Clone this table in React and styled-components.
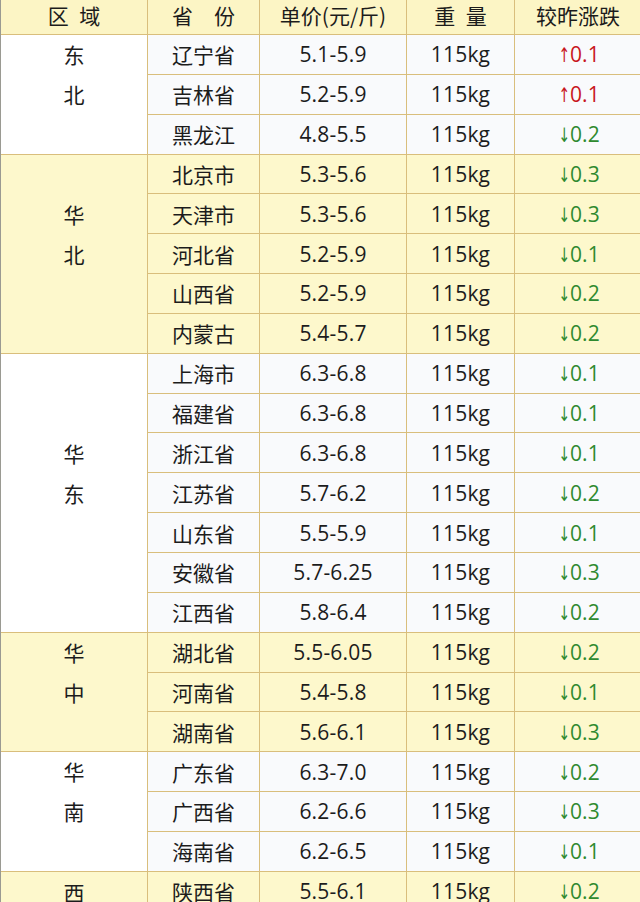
import React from "react";
import styled, { createGlobalStyle } from "styled-components";

const Global = createGlobalStyle`
  html, body { margin: 0; padding: 0; background: #ffffff; }
  body { width: 640px; height: 902px; overflow: hidden; }
`;

const Grid = styled.div`
  display: grid;
  grid-template-columns: 146px 111px 146px 107px 126px;
  grid-template-rows: 34px;
  grid-auto-rows: 38.85px;
  gap: 1px;
  width: 640px;
  background: #d9be7c;
  border-left: 1px solid #9a9a92;
  box-sizing: border-box;
  font-family: "Open Sans", "Noto Sans CJK SC", sans-serif;
  font-size: 21px;
  color: #1c1c1c;
`;

const HeadCell = styled.div`
  background: #fcf5c5;
  display: flex;
  align-items: center;
  justify-content: center;
  padding-bottom: 4px;
  box-sizing: border-box;
  font-family: "Noto Sans CJK SC", sans-serif;
  white-space: pre;
`;

const Cell = styled.div`
  background: ${(p) => (p.$yellow ? "#fdf8cc" : "#f9fafc")};
  display: flex;
  align-items: center;
  justify-content: center;
  white-space: nowrap;
  font-family: ${(p) => (p.$cjk ? '"Noto Sans CJK SC", sans-serif' : '"Open Sans", "Noto Sans CJK SC", sans-serif')};
  letter-spacing: ${(p) => (p.$cjk ? "0" : "0.2px")};
`;

const RegionCell = styled.div`
  grid-row: span ${(p) => p.$span};
  background: ${(p) => (p.$yellow ? "#fdf8cc" : "#ffffff")};
  display: flex;
  flex-direction: column;
  align-items: center;
  justify-content: ${(p) => (p.$top ? "flex-start" : "center")};
  font-family: "Noto Sans CJK SC", sans-serif;
  line-height: 40px;
`;

const Change = styled.span`
  color: ${(p) => (p.$up ? "#c8161d" : "#2f8a2f")};
`;

const Arrow = styled.span`
  font-family: "DejaVu Sans", sans-serif;
  font-size: 20px;
  display: inline-block;
  transform: scaleX(0.7);
  margin-right: -3px;
`;

const groups = [
  { name: ["东", "北", ""], rows: [["辽宁省", "5.1-5.9", "+0.1"], ["吉林省", "5.2-5.9", "+0.1"], ["黑龙江", "4.8-5.5", "-0.2"]] },
  { name: ["华", "北", ""], rows: [["北京市", "5.3-5.6", "-0.3"], ["天津市", "5.3-5.6", "-0.3"], ["河北省", "5.2-5.9", "-0.1"], ["山西省", "5.2-5.9", "-0.2"], ["内蒙古", "5.4-5.7", "-0.2"]] },
  { name: ["华", "东", ""], rows: [["上海市", "6.3-6.8", "-0.1"], ["福建省", "6.3-6.8", "-0.1"], ["浙江省", "6.3-6.8", "-0.1"], ["江苏省", "5.7-6.2", "-0.2"], ["山东省", "5.5-5.9", "-0.1"], ["安徽省", "5.7-6.25", "-0.3"], ["江西省", "5.8-6.4", "-0.2"]] },
  { name: ["华", "中", ""], rows: [["湖北省", "5.5-6.05", "-0.2"], ["河南省", "5.4-5.8", "-0.1"], ["湖南省", "5.6-6.1", "-0.3"]] },
  { name: ["华", "南", ""], rows: [["广东省", "6.3-7.0", "-0.2"], ["广西省", "6.2-6.6", "-0.3"], ["海南省", "6.2-6.5", "-0.1"]] },
  { name: ["西"], top: true, rows: [["陕西省", "5.5-6.1", "-0.2"]] },
];

export default function App() {
  return (
    <>
      <Global />
      <Grid>
        <HeadCell>{"区\u2002域"}</HeadCell>
        <HeadCell>{"省\u3000份"}</HeadCell>
        <HeadCell>单价(元/斤)</HeadCell>
        <HeadCell>{"重\u2002量"}</HeadCell>
        <HeadCell>较昨涨跌</HeadCell>
        {groups.map((g, gi) => {
          const yellow = gi % 2 === 1;
          return (
            <React.Fragment key={gi}>
              {g.rows.map((r, ri) => {
                const up = r[2][0] === "+";
                return (
                  <React.Fragment key={ri}>
                    {ri === 0 && (
                      <RegionCell $span={g.rows.length} $yellow={yellow} $top={g.top}>
                        {g.name.map((c, ci) => (
                          <span key={ci}>{c || "\u00a0"}</span>
                        ))}
                      </RegionCell>
                    )}
                    <Cell $yellow={yellow} $cjk>{r[0]}</Cell>
                    <Cell $yellow={yellow}>{r[1]}</Cell>
                    <Cell $yellow={yellow}>115kg</Cell>
                    <Cell $yellow={yellow}>
                      <Change $up={up}>
                        <Arrow>{up ? "↑" : "↓"}</Arrow>
                        {r[2].slice(1)}
                      </Change>
                    </Cell>
                  </React.Fragment>
                );
              })}
            </React.Fragment>
          );
        })}
      </Grid>
    </>
  );
}
